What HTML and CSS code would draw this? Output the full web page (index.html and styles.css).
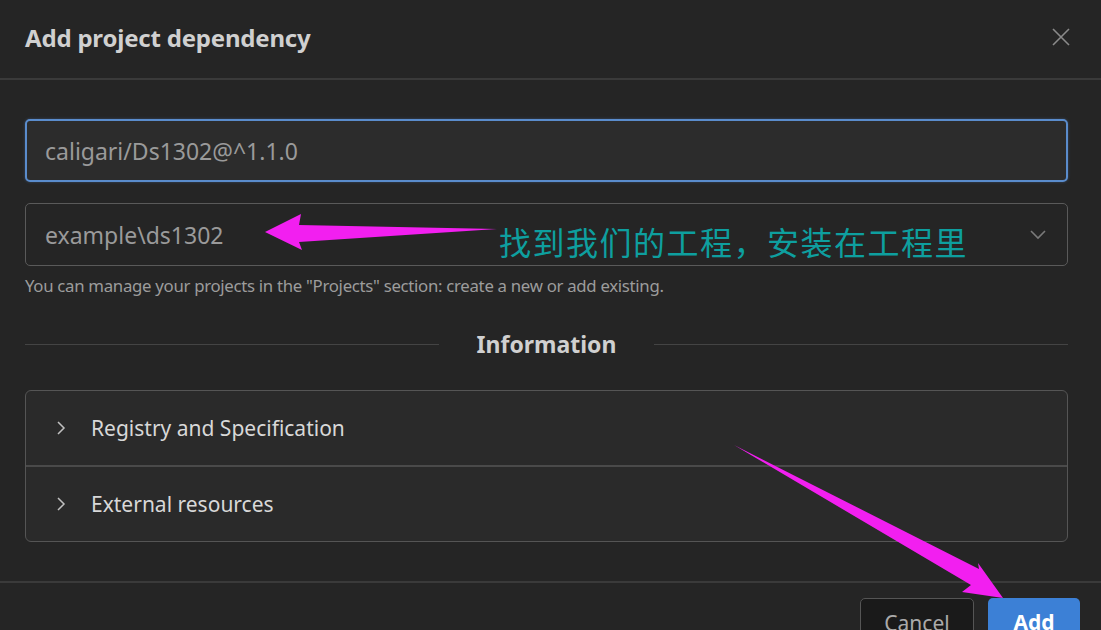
FILE: index.html
```html
<!DOCTYPE html>
<html lang="en">
<head>
    <meta charset="UTF-8">
    <title>Add project dependency</title>
    <link rel="stylesheet" href="styles.css">
</head>
<body>
    <div class="dialog">
        <div class="dialog-header">
            <div class="dialog-title">Add project dependency</div>
            <svg class="close-icon" width="20" height="20" viewBox="0 0 20 20">
                <path d="M2 2 L18 18 M18 2 L2 18" stroke="#8a8a8a" stroke-width="1.6" fill="none"/>
            </svg>
        </div>

        <div class="dialog-body">
            <div class="field field-focused">caligari/Ds1302@^1.1.0</div>
            <div class="field field-select">
                <span>example\ds1302</span>
                <svg class="select-chevron" width="18" height="12" viewBox="0 0 18 12">
                    <path d="M2 2 L9 9 L16 2" stroke="#7a7a7a" stroke-width="1.6" fill="none"/>
                </svg>
            </div>
            <div class="hint">You can manage your projects in the "Projects" section: create a new or add existing.</div>

            <div class="divider">
                <span class="divider-line"></span>
                <span class="divider-text">Information</span>
                <span class="divider-line"></span>
            </div>

            <div class="accordion">
                <div class="accordion-row">
                    <svg class="row-chevron" width="12" height="16" viewBox="0 0 12 16">
                        <path d="M3 2 L9 8 L3 14" stroke="#c0c0c0" stroke-width="1.5" fill="none"/>
                    </svg>
                    <span>Registry and Specification</span>
                </div>
                <div class="accordion-row">
                    <svg class="row-chevron" width="12" height="16" viewBox="0 0 12 16">
                        <path d="M3 2 L9 8 L3 14" stroke="#c0c0c0" stroke-width="1.5" fill="none"/>
                    </svg>
                    <span>External resources</span>
                </div>
            </div>
        </div>

        <div class="dialog-footer">
            <button class="btn btn-cancel">Cancel</button>
            <button class="btn btn-add">Add</button>
        </div>
    </div>

    <!-- annotation layer drawn on top of the screenshot -->
    <div class="note">找到我们的工程，安装在工程里</div>
    <svg class="arrows" width="1101" height="630" viewBox="0 0 1101 630">
        <path d="M265 232 L301 214 L299 225 L497 229 L299 242 L302 250 Z" fill="#f21ff0"/>
        <path d="M734 445 L979 569 L978 563 L1003 598 L962 592 L971 585 Z" fill="#f21ff0"/>
    </svg>
</body>
</html>
```

FILE: styles.css
```css
body {
    margin: 0;
    background-color: #252525;
    font-family: 'Noto Sans', 'Open Sans', sans-serif;
    color: #cccccc;
    width: 1101px;
    height: 630px;
    overflow: hidden;
    position: relative;
}

.dialog {
    display: flex;
    flex-direction: column;
    height: 100%;
}

.dialog > * {
    flex-shrink: 0;
}

.dialog-header {
    height: 80px;
    box-sizing: border-box;
    border-bottom: 2px solid #3a3a3a;
    display: flex;
    align-items: center;
    justify-content: space-between;
    padding: 0 30px 4px 25px;
}

.dialog-title {
    font-size: 24px;
    font-weight: bold;
    color: #d0d0d0;
    letter-spacing: -0.2px;
}

.dialog-body {
    padding: 39px 33px 0 25px;
}

.field {
    height: 63px;
    box-sizing: border-box;
    border-radius: 5px;
    border: 1px solid #5a5a5a;
    padding: 0 19px;
    display: flex;
    align-items: center;
    font-size: 23px;
    color: #9a9a9a;
}

.field-focused {
    border: 2px solid #5a8ccc;
    background-color: #2c2c2c;
    padding-left: 18px;
    box-shadow: 0 0 3px rgba(90, 140, 204, 0.4);
}

.field-select {
    margin-top: 21px;
    justify-content: space-between;
    padding-right: 20px;
}

.hint {
    margin-top: 8px;
    font-size: 16.8px;
    line-height: 24px;
    color: #9c9c9c;
    letter-spacing: -0.3px;
}

.divider {
    display: flex;
    align-items: center;
    margin-top: 26px;
    height: 40px;
}

.divider-line {
    flex: 1;
    height: 1px;
    background-color: #444444;
}

.divider-text {
    padding: 0 38px;
    font-size: 23px;
    font-weight: bold;
    color: #d0d0d0;
}

.accordion {
    margin-top: 26px;
    border: 1px solid #555555;
    border-radius: 6px;
    background-color: #2a2a2a;
}

.accordion-row {
    height: 74px;
    display: flex;
    align-items: center;
    padding-left: 29px;
    font-size: 21px;
    color: #d8d8d8;
}

.accordion-row + .accordion-row {
    border-top: 2px solid #4a4a4a;
}

.row-chevron {
    margin-right: 24px;
}

.dialog-footer {
    margin-top: 39px;
    border-top: 2px solid #3a3a3a;
    display: flex;
    justify-content: flex-end;
    gap: 14px;
    padding: 15px 21px 0 0;
}

.btn {
    height: 50px;
    border-radius: 5px;
    font-family: 'Noto Sans', 'Open Sans', sans-serif;
    font-size: 21px;
    padding: 10px 0 0;
    display: flex;
    justify-content: center;
}

.btn-cancel {
    width: 114px;
    background-color: #1a1a1a;
    border: 1px solid #555555;
    color: #aaaaaa;
}

.btn-add {
    width: 92px;
    background-color: #3c80d6;
    border: none;
    color: #ffffff;
    font-weight: bold;
}

.note {
    position: absolute;
    left: 499px;
    top: 219px;
    font-family: 'Noto Sans CJK SC', sans-serif;
    font-size: 32px;
    line-height: 44px;
    color: #0e9f9f;
    letter-spacing: 1.5px;
}

.arrows {
    position: absolute;
    left: 0;
    top: 0;
}
```
